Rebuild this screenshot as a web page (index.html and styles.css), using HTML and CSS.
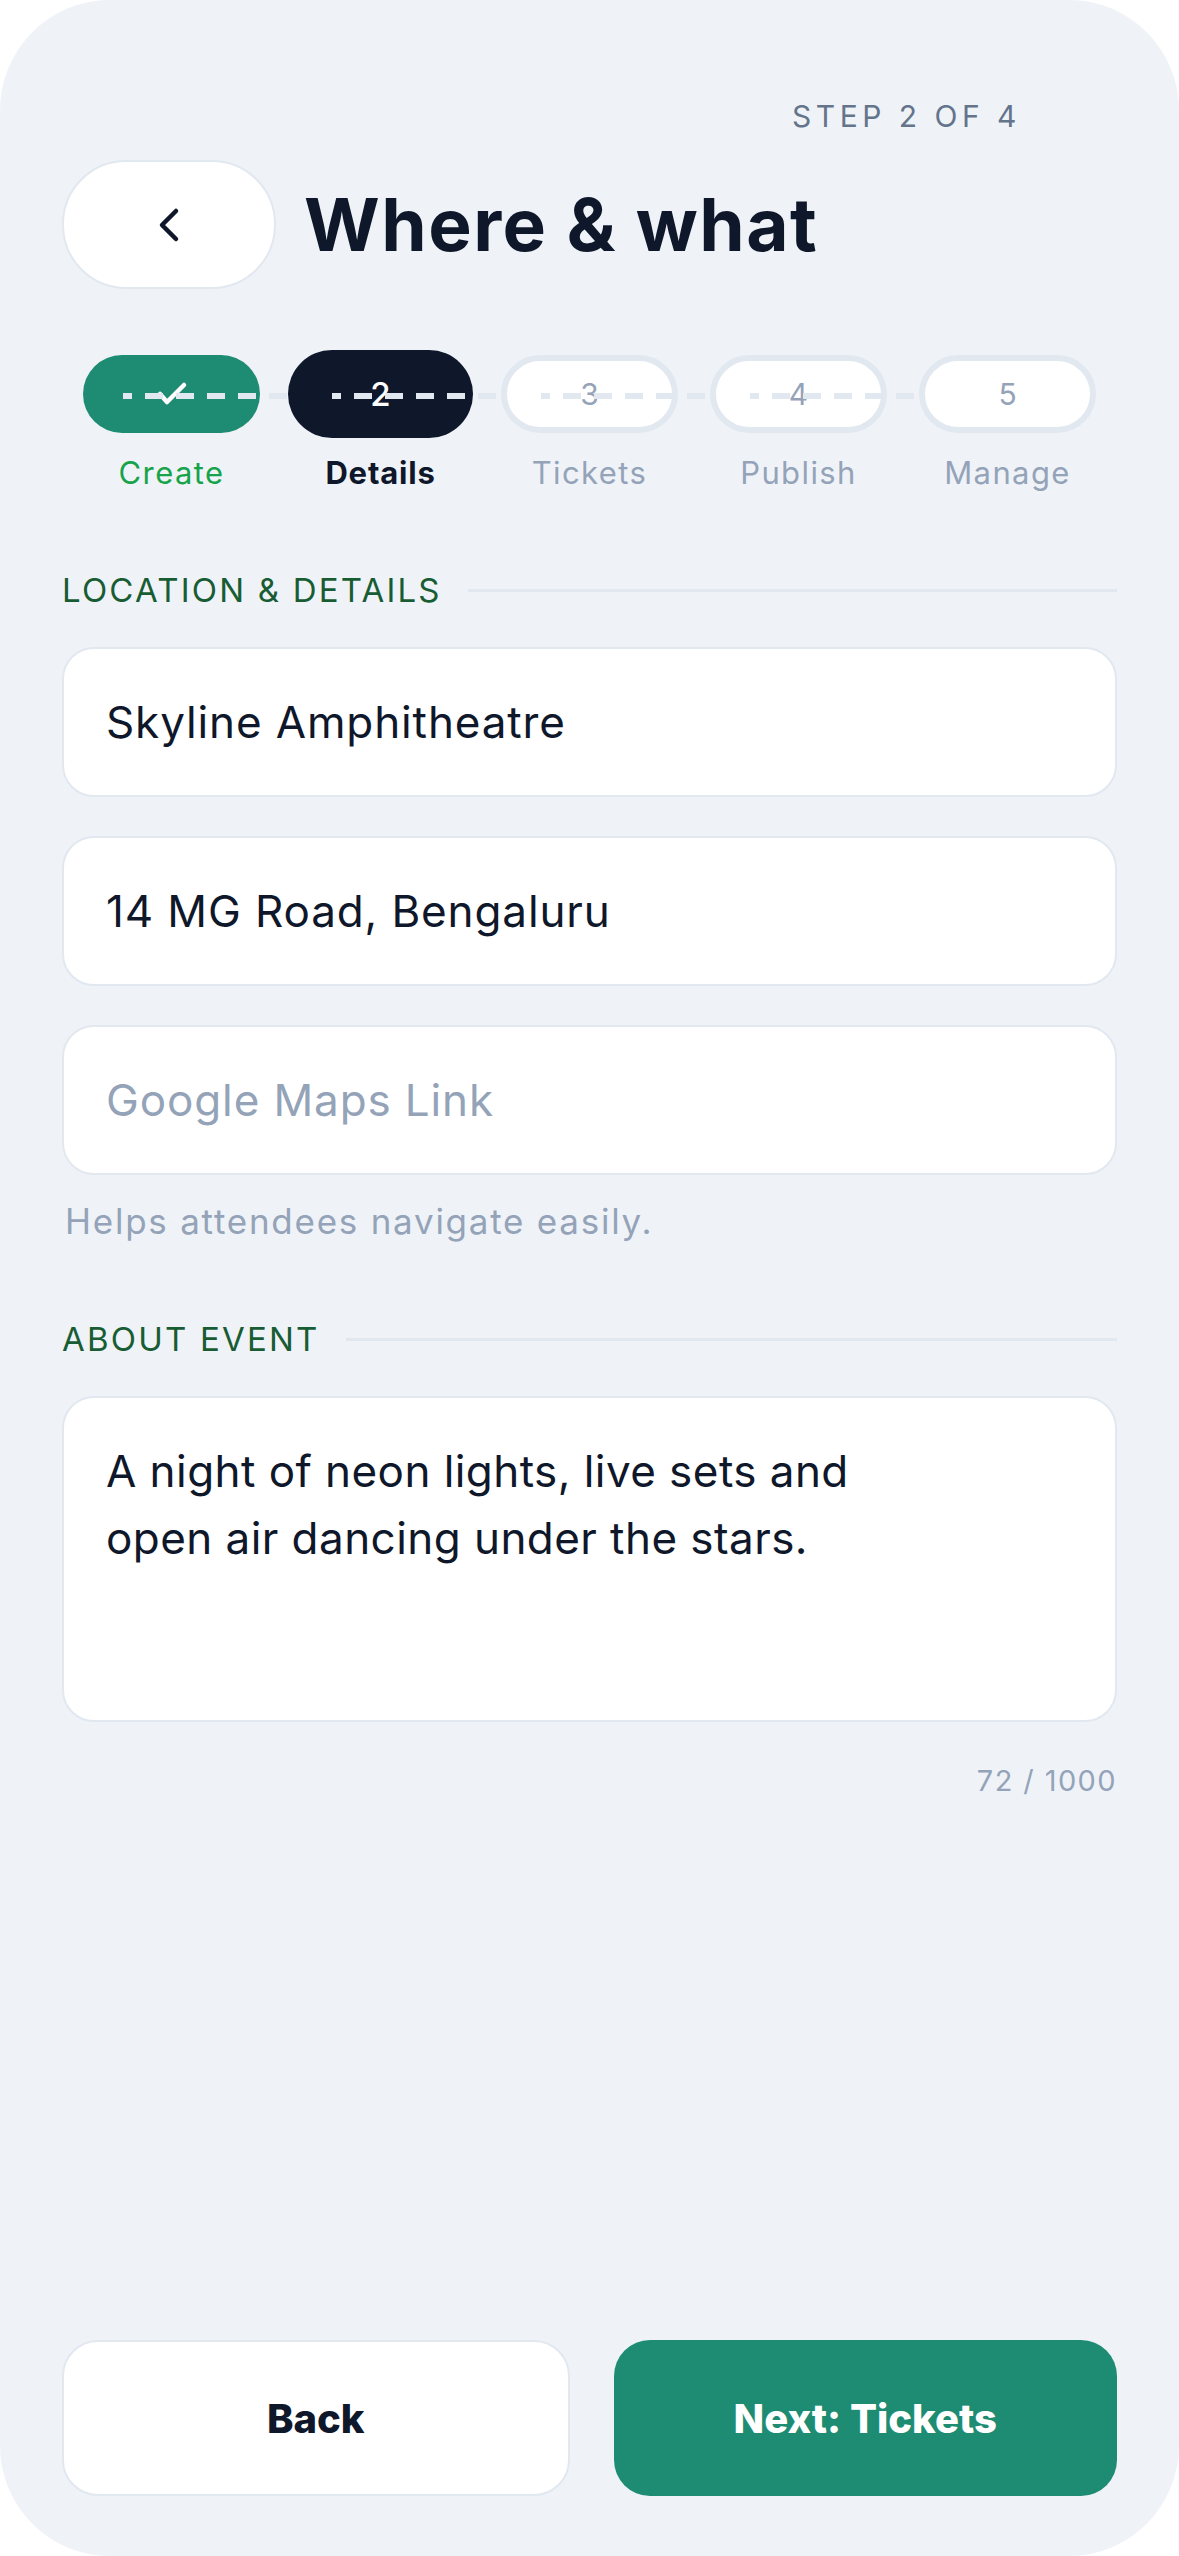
FILE: index.html
```html
<!DOCTYPE html>
<html lang="en">
<head>
  <meta charset="UTF-8">
  <title>Where &amp; what</title>
  <link rel="stylesheet" href="styles.css">
</head>
<body>
  <div class="screen">
    <div class="step-count">STEP 2 OF 4</div>

    <div class="header">
      <button class="back-btn" aria-label="Back">
        <svg width="24" height="36" viewBox="0 0 24 36"><path d="M19 4 L5 18 L19 32" fill="none" stroke="#0f172a" stroke-width="4.5" stroke-linecap="round" stroke-linejoin="round"/></svg>
      </button>
      <h1>Where &amp; what</h1>
    </div>

    <ol class="stepper">
      <li class="step done">
        <div class="pill-wrap">
          <span class="pill">
            <svg width="32" height="26" viewBox="0 0 32 26"><path d="M4 13 L11 21 L28 4" fill="none" stroke="#fff" stroke-width="4.5" stroke-linecap="round" stroke-linejoin="round"/></svg>
          </span>
          <span class="step-line"></span>
        </div>
        <span class="step-label">Create</span>
      </li>
      <li class="step active">
        <div class="pill-wrap">
          <span class="pill">2</span>
          <span class="step-line"></span>
        </div>
        <span class="step-label">Details</span>
      </li>
      <li class="step">
        <div class="pill-wrap">
          <span class="pill">3</span>
          <span class="step-line"></span>
        </div>
        <span class="step-label">Tickets</span>
      </li>
      <li class="step">
        <div class="pill-wrap">
          <span class="pill">4</span>
          <span class="step-line"></span>
        </div>
        <span class="step-label">Publish</span>
      </li>
      <li class="step">
        <div class="pill-wrap">
          <span class="pill">5</span>
        </div>
        <span class="step-label">Manage</span>
      </li>
    </ol>

    <div class="section-title first"><span>LOCATION &amp; DETAILS</span></div>
    <div class="field">Skyline Amphitheatre</div>
    <div class="field">14 MG Road, Bengaluru</div>
    <div class="field placeholder">Google Maps Link</div>
    <p class="hint">Helps attendees navigate easily.</p>

    <div class="section-title"><span>ABOUT EVENT</span></div>
    <div class="field textarea">A night of neon lights, live sets and<br>open air dancing under the stars.</div>
    <div class="counter">72 / 1000</div>

    <div class="actions">
      <button class="btn btn-back">Back</button>
      <button class="btn btn-next">Next: Tickets</button>
    </div>
  </div>
</body>
</html>
```

FILE: styles.css
```css
body {
  margin: 0;
  background: #fff;
  font-family: Inter, "Noto Sans", sans-serif;
  color: #0f172a;
}
.screen {
  width: 1179px;
  min-height: 2556px;
  box-sizing: border-box;
  background: #eff3f8;
  border-radius: 110px;
  padding: 0 62px 60px;
  display: flex;
  flex-direction: column;
}
.step-count {
  margin-top: 98px;
  padding-right: 96px;
  text-align: right;
  font-size: 30px;
  line-height: 36px;
  letter-spacing: 0.15em;
  color: #64748b;
}
.header {
  display: flex;
  align-items: center;
  gap: 28px;
  margin-top: 26px;
}
.back-btn {
  width: 214px;
  height: 129px;
  border: 2px solid #e2e8f0;
  border-radius: 64px;
  background: #fff;
  display: flex;
  align-items: center;
  justify-content: center;
  padding: 0;
}
h1 {
  margin: 0;
  font-size: 73px;
  font-weight: 700;
  letter-spacing: 1.5px;
  color: #0f172a;
}
.stepper {
  list-style: none;
  margin: 61px 0 0 5px;
  padding: 0;
  display: grid;
  grid-template-columns: repeat(5, 209px);
}
.step {
  display: flex;
  flex-direction: column;
  align-items: center;
}
.pill-wrap {
  position: relative;
  width: 100%;
  height: 88px;
  display: flex;
  align-items: center;
  justify-content: center;
}
.pill {
  position: relative;
  width: 177px;
  height: 78px;
  box-sizing: border-box;
  border-radius: 44px;
  display: flex;
  align-items: center;
  justify-content: center;
  background: #fff;
  border: 6px solid #e2e8f0;
  font-size: 30px;
  color: #94a3b8;
}
.step.done .pill {
  background: #1e8c73;
  border: none;
}
.step.active .pill {
  width: 185px;
  height: 88px;
  background: #0f172a;
  border: none;
  color: #fff;
  font-size: 33px;
  font-weight: 500;
}
.step-line {
  position: absolute;
  top: 43px;
  left: calc(50% - 49px);
  width: 230px;
  height: 6px;
  background: repeating-linear-gradient(90deg, #e2e8f0 0 9px, transparent 9px 22px, #e2e8f0 22px 31px);
}
.step-label {
  margin-top: 17px;
  font-size: 31px;
  line-height: 36px;
  letter-spacing: 1.4px;
  color: #94a3b8;
}
.step.done .step-label {
  color: #16a34a;
}
.step.active .step-label {
  color: #0f172a;
  font-weight: 700;
  letter-spacing: 0.8px;
}
.section-title {
  display: flex;
  align-items: center;
  gap: 26px;
  margin-top: 78px;
  margin-bottom: 37px;
  font-size: 33px;
  line-height: 40px;
  letter-spacing: 2.2px;
  color: #185c33;
}
.section-title.first {
  margin-top: 79px;
}
.section-title::after {
  content: "";
  flex: 1;
  height: 3px;
  background: #e2e8f0;
}
.field {
  height: 150px;
  box-sizing: border-box;
  margin-bottom: 39px;
  padding: 0 42px;
  background: #fff;
  border: 2px solid #e2e8f0;
  border-radius: 32px;
  display: flex;
  align-items: center;
  font-size: 44px;
  letter-spacing: 0.02em;
  color: #0f172a;
}
.field.placeholder {
  color: #94a3b8;
  margin-bottom: 0;
}
.field.textarea {
  height: 326px;
  display: block;
  padding-top: 40px;
  line-height: 67px;
  margin-bottom: 0;
  letter-spacing: 0.01em;
}
.hint {
  margin: 26px 0 0;
  padding-left: 3px;
  font-size: 35px;
  line-height: 40px;
  letter-spacing: 1.75px;
  color: #94a3b8;
}
.counter {
  margin-top: 41px;
  text-align: right;
  font-size: 29px;
  line-height: 35px;
  letter-spacing: 1.4px;
  color: #94a3b8;
}
.actions {
  margin-top: auto;
  display: flex;
  gap: 44px;
}
.btn {
  flex: 1;
  height: 156px;
  border-radius: 36px;
  font-family: Inter, "Noto Sans", sans-serif;
  font-size: 40px;
  font-weight: 800;
  cursor: pointer;
}
.btn-back {
  background: #fff;
  border: 2px solid #e2e8f0;
  color: #0f172a;
}
.btn-next {
  background: #1e8c73;
  border: none;
  color: #fff;
}
```
